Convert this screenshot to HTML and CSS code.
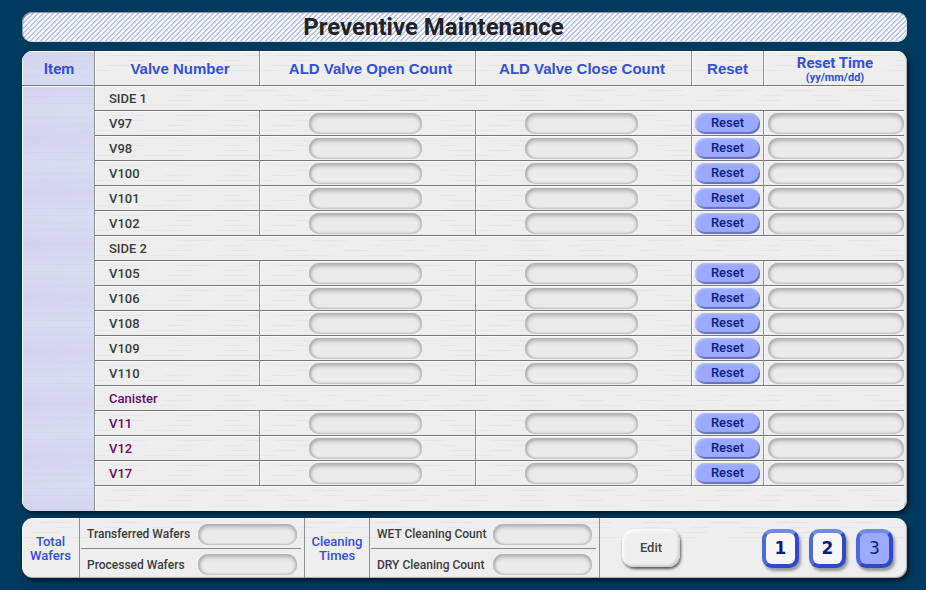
FILE: index.html
```
<!DOCTYPE html>
<html lang="en">
<head>
<meta charset="utf-8">
<title>Preventive Maintenance</title>
<link rel="stylesheet" href="styles.css">
</head>
<body>
<header class="title-bar"><h1>Preventive Maintenance</h1></header>
<main class="panel">
<table class="valves">
<colgroup><col class="c-item"><col class="c-valve"><col><col><col class="c-reset"><col class="c-time"></colgroup>
<thead>
<tr><th class="item">Item</th><th class="name">Valve Number</th><th class="name" id="open">ALD Valve Open Count</th><th class="name closing" id="close">ALD Valve Close Count</th><th class="name reset">Reset</th><th id="time">Reset Time<small>(yy/mm/dd)</small></th></tr>
</thead>
<tbody>
<tr><td class="item" rowspan="17"></td><td class="group" colspan="5">SIDE 1</td></tr>
<tr><td id="v97">V97</td><td class="count"><input aria-labelledby="v97 open"></td><td class="count"><input aria-labelledby="v97 close"></td><td class="action"><button>Reset</button></td><td class="time"><input aria-labelledby="v97 time"></td></tr>
<tr><td id="v98">V98</td><td class="count"><input aria-labelledby="v98 open"></td><td class="count"><input aria-labelledby="v98 close"></td><td class="action"><button>Reset</button></td><td class="time"><input aria-labelledby="v98 time"></td></tr>
<tr><td id="v100">V100</td><td class="count"><input aria-labelledby="v100 open"></td><td class="count"><input aria-labelledby="v100 close"></td><td class="action"><button>Reset</button></td><td class="time"><input aria-labelledby="v100 time"></td></tr>
<tr><td id="v101">V101</td><td class="count"><input aria-labelledby="v101 open"></td><td class="count"><input aria-labelledby="v101 close"></td><td class="action"><button>Reset</button></td><td class="time"><input aria-labelledby="v101 time"></td></tr>
<tr><td id="v102">V102</td><td class="count"><input aria-labelledby="v102 open"></td><td class="count"><input aria-labelledby="v102 close"></td><td class="action"><button>Reset</button></td><td class="time"><input aria-labelledby="v102 time"></td></tr>
<tr><td class="group" colspan="5">SIDE 2</td></tr>
<tr><td id="v105">V105</td><td class="count"><input aria-labelledby="v105 open"></td><td class="count"><input aria-labelledby="v105 close"></td><td class="action"><button>Reset</button></td><td class="time"><input aria-labelledby="v105 time"></td></tr>
<tr><td id="v106">V106</td><td class="count"><input aria-labelledby="v106 open"></td><td class="count"><input aria-labelledby="v106 close"></td><td class="action"><button>Reset</button></td><td class="time"><input aria-labelledby="v106 time"></td></tr>
<tr><td id="v108">V108</td><td class="count"><input aria-labelledby="v108 open"></td><td class="count"><input aria-labelledby="v108 close"></td><td class="action"><button>Reset</button></td><td class="time"><input aria-labelledby="v108 time"></td></tr>
<tr><td id="v109">V109</td><td class="count"><input aria-labelledby="v109 open"></td><td class="count"><input aria-labelledby="v109 close"></td><td class="action"><button>Reset</button></td><td class="time"><input aria-labelledby="v109 time"></td></tr>
<tr><td id="v110">V110</td><td class="count"><input aria-labelledby="v110 open"></td><td class="count"><input aria-labelledby="v110 close"></td><td class="action"><button>Reset</button></td><td class="time"><input aria-labelledby="v110 time"></td></tr>
<tr class="canister"><td class="group" colspan="5">Canister</td></tr>
<tr class="canister"><td id="v11">V11</td><td class="count"><input aria-labelledby="v11 open"></td><td class="count"><input aria-labelledby="v11 close"></td><td class="action"><button>Reset</button></td><td class="time"><input aria-labelledby="v11 time"></td></tr>
<tr class="canister"><td id="v12">V12</td><td class="count"><input aria-labelledby="v12 open"></td><td class="count"><input aria-labelledby="v12 close"></td><td class="action"><button>Reset</button></td><td class="time"><input aria-labelledby="v12 time"></td></tr>
<tr class="canister"><td id="v17">V17</td><td class="count"><input aria-labelledby="v17 open"></td><td class="count"><input aria-labelledby="v17 close"></td><td class="action"><button>Reset</button></td><td class="time"><input aria-labelledby="v17 time"></td></tr>
<tr><td class="blank" colspan="5"></td></tr>
</tbody>
</table>
</main>
<footer class="panel summary">
<h2>Total<br>Wafers</h2>
<div class="fields">
<div class="field"><label for="transferred">Transferred Wafers</label><input id="transferred"></div>
<div class="field"><label for="processed">Processed Wafers</label><input id="processed"></div>
</div>
<h2>Cleaning<br>Times</h2>
<div class="fields">
<div class="field"><label for="wet">WET Cleaning Count</label><input id="wet"></div>
<div class="field"><label for="dry">DRY Cleaning Count</label><input id="dry"></div>
</div>
<div class="actions">
<button class="edit">Edit</button>
<nav class="pages"><button>1</button><button>2</button><button class="current" aria-current="page">3</button></nav>
</div>
</footer>
</body>
</html>
```
FILE: styles.css
```
* { box-sizing: border-box; }

body {
  margin: 0;
  padding: 12px 19px 12px 22px;
  background: #003a5d;
  color: #3c3c3c;
  font: 500 13px/16px Roboto, "Liberation Sans", sans-serif;
}

h1, h2 { margin: 0; }
button, input { font: inherit; }

.title-bar {
  height: 30px;
  margin-bottom: 9px;
  border-radius: 10px;
  background: linear-gradient(135deg, #fff 14%, #b4c4fb 14% 36%, #fff 36% 64%, #b4c4fb 64% 86%, #fff 86%) 0 0 / 5px 5px;
  box-shadow: inset 1px 1px 1px #8c8c94, inset -1px -1px 1px #d8dcea;
  text-align: center;
}

.title-bar h1 {
  padding-right: 62px;
  color: #222;
  font: bold 24px/30px Roboto, "Liberation Sans", sans-serif;
}

.panel {
  border-radius: 11px;
  background: #eee;
  box-shadow: inset 1px 1px 1px #fff, inset -1px -1px 1px #aaa, 2px 3px 4px #001a30;
}

/* Brushed metal surface: short faint dashes on tiles of unequal size */
.valves th, .valves td, .summary {
  background:
    linear-gradient(90deg, transparent 20%, #e5e5e5 30% 70%, transparent 80%) 0 4px / 67px 1px repeat-x,
    linear-gradient(90deg, transparent 45%, #e7e7e7 50% 80%, transparent 90%) 9px 9px / 49px 1px repeat-x,
    linear-gradient(90deg, transparent 10%, #e5e5e5 20% 55%, transparent 60%) 3px 14px / 59px 1px repeat-x,
    linear-gradient(90deg, transparent 30%, #e7e7e7 40% 90%, transparent) 21px 19px / 73px 1px repeat-x,
    #eee;
}

main.panel {
  margin-bottom: 7px;
  padding-right: 3px;
  overflow: hidden;
}

.valves {
  width: 100%;
  table-layout: fixed;
  border-collapse: separate;
  border-spacing: 0;
}

.c-item { width: 73px; }
.c-valve { width: 165px; }
.c-reset { width: 72px; }
.c-time { width: 140px; }

.valves th, .valves td {
  padding: 0;
  border-right: 1px solid #8f8f8f;
  border-bottom: 1px solid #777;
  box-shadow: inset 1px 1px #fafafa;
}

.valves th {
  height: 35px;
  padding: 2px 0 0 2px;
  color: #344fd9;
  font: bold 15px/17px Roboto, "Liberation Sans", sans-serif;
}

.valves .name { padding: 0 0 0 6px; font-family: "Liberation Sans", sans-serif; }
.valves .closing { padding: 0 3px 0 0; }
.valves .reset { padding: 0; }
.valves #time { padding-top: 3px; line-height: 15px; }
.valves tr > :last-child { border-right: 0; }
.valves th small { display: block; font-size: 11px; line-height: 13px; }
.valves td { height: 25px; }
.valves td[id], .valves .group { padding: 2px 0 0 14px; }

.valves .item {
  border-right: 1px solid #8f8f8f;
  background:
    repeating-linear-gradient(transparent 0 3px, #cdd1e960 3px 4px, transparent 4px 7px),
    linear-gradient(90deg, #d5d5ee99, #d6dbf099),
    linear-gradient(#d0cfec, #dbe3f3 50%, #d0cfec) 0 0 / 100% 53px;
}

.valves td.item, .valves .blank { border-bottom: 0; }

input {
  display: block;
  height: 21px;
  min-width: 0;
  padding: 0 8px;
  border: 0;
  border-radius: 10px;
  background: #ebebeb;
  box-shadow: inset 0 3px 4px #b0b0b0, inset 2px 0 3px #b8b8b8, inset -1px 0 3px #b8b8b8, inset 0 -1px 1px #e2e2e2;
}

.count input { width: 113px; margin: 0 auto; }
.valves .count { padding: 0 5px 0 0; }
.valves .time { padding: 0 0 0 4px; }
.time input { width: 100%; }

.action button {
  display: block;
  width: 65px;
  height: 21px;
  margin: 0 auto;
  padding: 0;
  border: 0;
  border-radius: 10px;
  background: #9baaff;
  box-shadow: inset 1px 1px 2px #b8c5ff, inset -1px -2px 1px #6470b5;
  color: #0b1c80;
}

.canister { color: #6c0968; }

.summary {
  display: grid;
  grid-template-columns: 58px 225px 65px 230px 1fr;
  height: 60px;
}

.summary h2 {
  padding-top: 17px;
  border-right: 1px solid #8f8f8f;
  color: #344fd9;
  font: 500 13px/14px Roboto, "Liberation Sans", sans-serif;
  text-align: center;
}

.fields { padding: 0 3px 0 1px; border-right: 1px solid #8f8f8f; }

.field {
  display: flex;
  align-items: center;
  justify-content: space-between;
  height: 31px;
  padding: 2px 4px 0 6px;
  border-bottom: 1px solid #888;
  white-space: nowrap;
}

.field + .field { height: 29px; border-bottom: 0; }
.field label { font-size: 12px; }
.field input { flex: none; width: 99px; }

.actions {
  display: flex;
  align-items: center;
  justify-content: space-between;
  padding: 0 14px 0 22px;
}

.edit {
  width: 58px;
  height: 38px;
  border: 0;
  border-radius: 12px;
  background: #efefef;
  box-shadow: inset 2px 2px 2px #fafafa, inset -2px -2px 2px #cfcfcf, 1px 2px 3px #555;
  color: #444;
}

.pages { display: flex; gap: 10px; }

.pages button {
  width: 37px;
  height: 39px;
  padding: 0;
  border: 4px solid #2e49cb;
  border-top-color: #7389e6;
  border-left-color: #5069d8;
  border-radius: 10px;
  background: #f7f7fa;
  box-shadow: 2px 3px 3px #999;
  color: #0b1c80;
  font: bold 17px/20px "DejaVu Sans", sans-serif;
}

.pages .current { background: #9baaff; font-weight: normal; }
```
